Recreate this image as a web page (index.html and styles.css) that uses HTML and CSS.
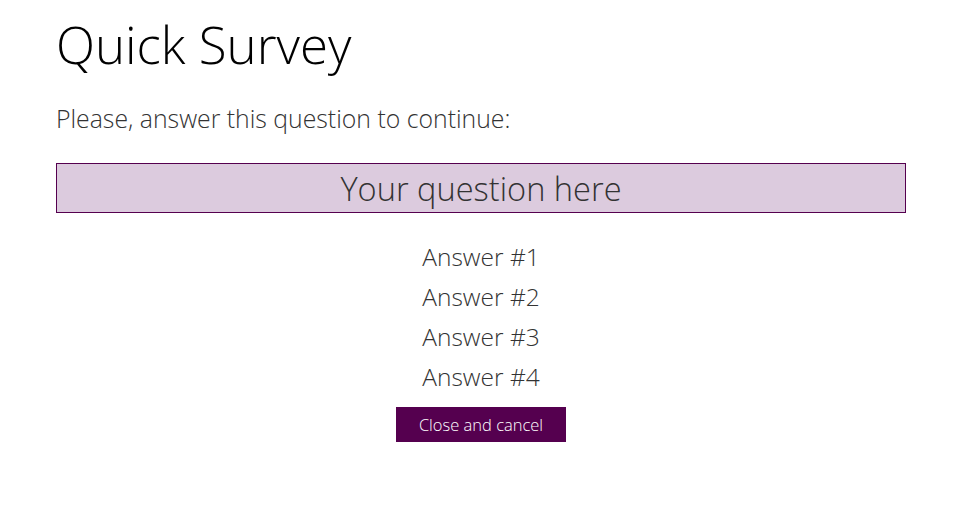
FILE: index.html
```html
<!DOCTYPE html>
<html lang="en">
<head>
    <meta charset="UTF-8">
    <title>Quick Survey</title>
    <link rel="stylesheet" href="styles.css">
</head>
<body>
    <div class="container">
        <h1>Quick Survey</h1>
        <p class="intro">Please, answer this question to continue:</p>

        <div class="question">Your question here</div>

        <ul class="answers">
            <li>Answer #1</li>
            <li>Answer #2</li>
            <li>Answer #3</li>
            <li>Answer #4</li>
        </ul>

        <div class="actions">
            <button type="button">Close and cancel</button>
        </div>
    </div>
</body>
</html>
```

FILE: styles.css
```css
body {
    font-family: "Open Sans", Arial, sans-serif;
    font-weight: 300;
    margin: 0;
    background-color: white;
    color: #333;
}
.container {
    width: 850px;
    padding: 8px 0 0 56px;
}
h1 {
    font-size: 51px;
    font-weight: 300;
    color: #000;
    margin: 0;
    line-height: 72px;
}
.intro {
    font-size: 24.8px;
    margin: 22px 0 29px;
    line-height: 32px;
}
.question {
    background-color: #dccbde;
    border: 1px solid #55004f;
    text-align: center;
    font-size: 32.6px;
    line-height: 46px;
    padding-top: 2px;
}
.answers {
    list-style: none;
    margin: 24px 0 0;
    padding: 0;
    text-align: center;
    font-size: 24.5px;
}
.answers li {
    line-height: 40px;
}
.actions {
    text-align: center;
    margin-top: 10px;
}
button {
    background-color: #55004f;
    color: white;
    border: none;
    font-family: inherit;
    font-weight: 300;
    font-size: 16.5px;
    width: 170px;
    height: 35px;
    cursor: pointer;
}
```
